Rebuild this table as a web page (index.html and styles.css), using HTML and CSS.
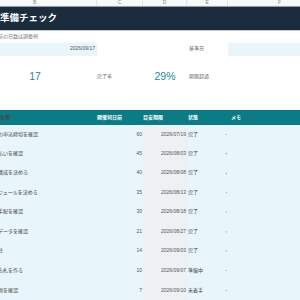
FILE: index.html
```html
<!DOCTYPE html>
<html lang="ja">
<head>
<meta charset="utf-8">
<title>準備チェック</title>
<link rel="stylesheet" href="styles.css">
</head>
<body>
<div class="sheet">
  <div class="grid colhdr">
    <div class="ch">B</div><div class="ch">C</div><div class="ch">D</div><div class="ch">E</div><div class="ch">F</div>
  </div>
  <div class="title">出展準備チェック</div>
  <div class="note">※開催日前の日数は調整例</div>
  <div class="grid daterow">
    <div class="input num">2026/09/17</div>
    <div></div>
    <div></div>
    <div class="lbl lbl-e">基準日</div>
    <div class="input"></div>
  </div>
  <div class="grid kpi">
    <div class="big">17</div>
    <div class="lbl">完了率</div>
    <div class="big">29%</div>
    <div class="lbl lbl-e">期限超過</div>
    <div></div>
  </div>
  <div class="grid thead">
    <div class="th task">タスク・持ち物</div>
    <div class="th">開催何日前</div>
    <div class="th">目安期限</div>
    <div class="th st-h">状態</div>
    <div class="th memo">メモ</div>
  </div>
  <div class="grid row"><div class="task">展示会への申込締切を確認</div><div class="days">60</div><div class="due">2026/07/19</div><div class="st">完了<i class="dd"></i></div><div></div></div>
  <div class="grid row"><div class="task">出展料支払いを確認</div><div class="days">45</div><div class="due">2026/08/03</div><div class="st">完了<i class="dd"></i></div><div></div></div>
  <div class="grid row"><div class="task">展示物の構成を決める</div><div class="days">40</div><div class="due">2026/08/08</div><div class="st">完了<i class="dd"></i></div><div></div></div>
  <div class="grid row"><div class="task">当日スケジュールを決める</div><div class="days">35</div><div class="due">2026/08/13</div><div class="st">完了<i class="dd"></i></div><div></div></div>
  <div class="grid row"><div class="task">会場備品手配を確認</div><div class="days">30</div><div class="due">2026/08/18</div><div class="st">完了<i class="dd"></i></div><div></div></div>
  <div class="grid row"><div class="task">受付名簿データを確認</div><div class="days">21</div><div class="due">2026/08/27</div><div class="st">完了<i class="dd"></i></div><div></div></div>
  <div class="grid row"><div class="task">備品を発注</div><div class="days">14</div><div class="due">2026/09/03</div><div class="st">完了<i class="dd"></i></div><div></div></div>
  <div class="grid row"><div class="task">参加者の名札を作る</div><div class="days">10</div><div class="due">2026/09/07</div><div class="st">準備中<i class="dd"></i></div><div></div></div>
  <div class="grid row"><div class="task">最終持ち物を確認</div><div class="days">7</div><div class="due">2026/09/10</div><div class="st">未着手<i class="dd"></i></div><div></div></div>
</div>
</body>
</html>
```

FILE: styles.css
```css
html, body {
  margin: 0;
  padding: 0;
  background: #ffffff;
  overflow: hidden;
}
body {
  width: 300px;
  height: 300px;
  font-family: "Liberation Sans", "Noto Sans CJK JP", sans-serif;
  color: #444;
}
/* The sheet is laid out at 120% and displayed at the spreadsheet's zoom level */
.sheet {
  margin-left: -27px;
  width: 430.8px;
  transform: scale(0.833333);
  transform-origin: 0 0;
}
.grid {
  display: grid;
  grid-template-columns: 148.8px 55.2px 52.8px 49.2px 124.8px;
}
.colhdr {
  height: 7.2px;
  background: #f8f9fa;
  border-bottom: 1.2px solid #c9c9c9;
}
.ch {
  border-right: 1.2px solid #dcdcdc;
  font-size: 6px;
  line-height: 7.2px;
  color: #888;
  text-align: center;
}
.title {
  height: 27.6px;
  background: #1b2c3d;
  color: #ffffff;
  font-weight: bold;
  font-size: 11.4px;
  line-height: 27.6px;
  padding-left: 9.6px;
  border-bottom: 1.2px solid #e3e6ea;
  white-space: nowrap;
}
.note {
  height: 14.4px;
  line-height: 14.4px;
  font-size: 6px;
  color: #777;
  padding-left: 6px;
  white-space: nowrap;
}
.daterow {
  height: 15.6px;
  line-height: 15.6px;
  font-size: 6px;
}
.input {
  background: #e8f5fa;
}
.num {
  text-align: right;
  padding-right: 2.4px;
  color: #555;
}
.lbl {
  font-size: 6px;
  color: #666;
  white-space: nowrap;
}
.lbl-e {
  padding-left: 2.4px;
}
.kpi {
  height: 50.4px;
  line-height: 50.4px;
}
.big {
  text-align: center;
  font-size: 12.6px;
  color: #1a8993;
}
.thead {
  margin-top: 14.4px;
  height: 18px;
  line-height: 18px;
  background: #0b7b86;
  color: #fff;
  font-size: 6px;
  font-weight: bold;
  white-space: nowrap;
}
.th.task {
  padding-left: 2.4px;
}
.th.st-h {
  padding-left: 1.2px;
}
.th.memo {
  padding-left: 3.6px;
}
.row {
  height: 23.4px;
  line-height: 23.4px;
  background: #e8f5fa;
  font-size: 6px;
  white-space: nowrap;
}
.task {
  padding-left: 6px;
  color: #444;
  overflow: hidden;
}
.days {
  text-align: right;
  padding-right: 1.2px;
  color: #555;
}
.due {
  background: #edf1f4;
  text-align: right;
  padding-right: 1.2px;
  color: #555;
}
.st {
  display: flex;
  align-items: center;
  justify-content: space-between;
  padding-left: 1.2px;
  padding-right: 1.2px;
  color: #444;
}
.dd {
  width: 0;
  height: 0;
  border-left: 1.4px solid transparent;
  border-right: 1.4px solid transparent;
  border-top: 1.9px solid #666;
}
```
